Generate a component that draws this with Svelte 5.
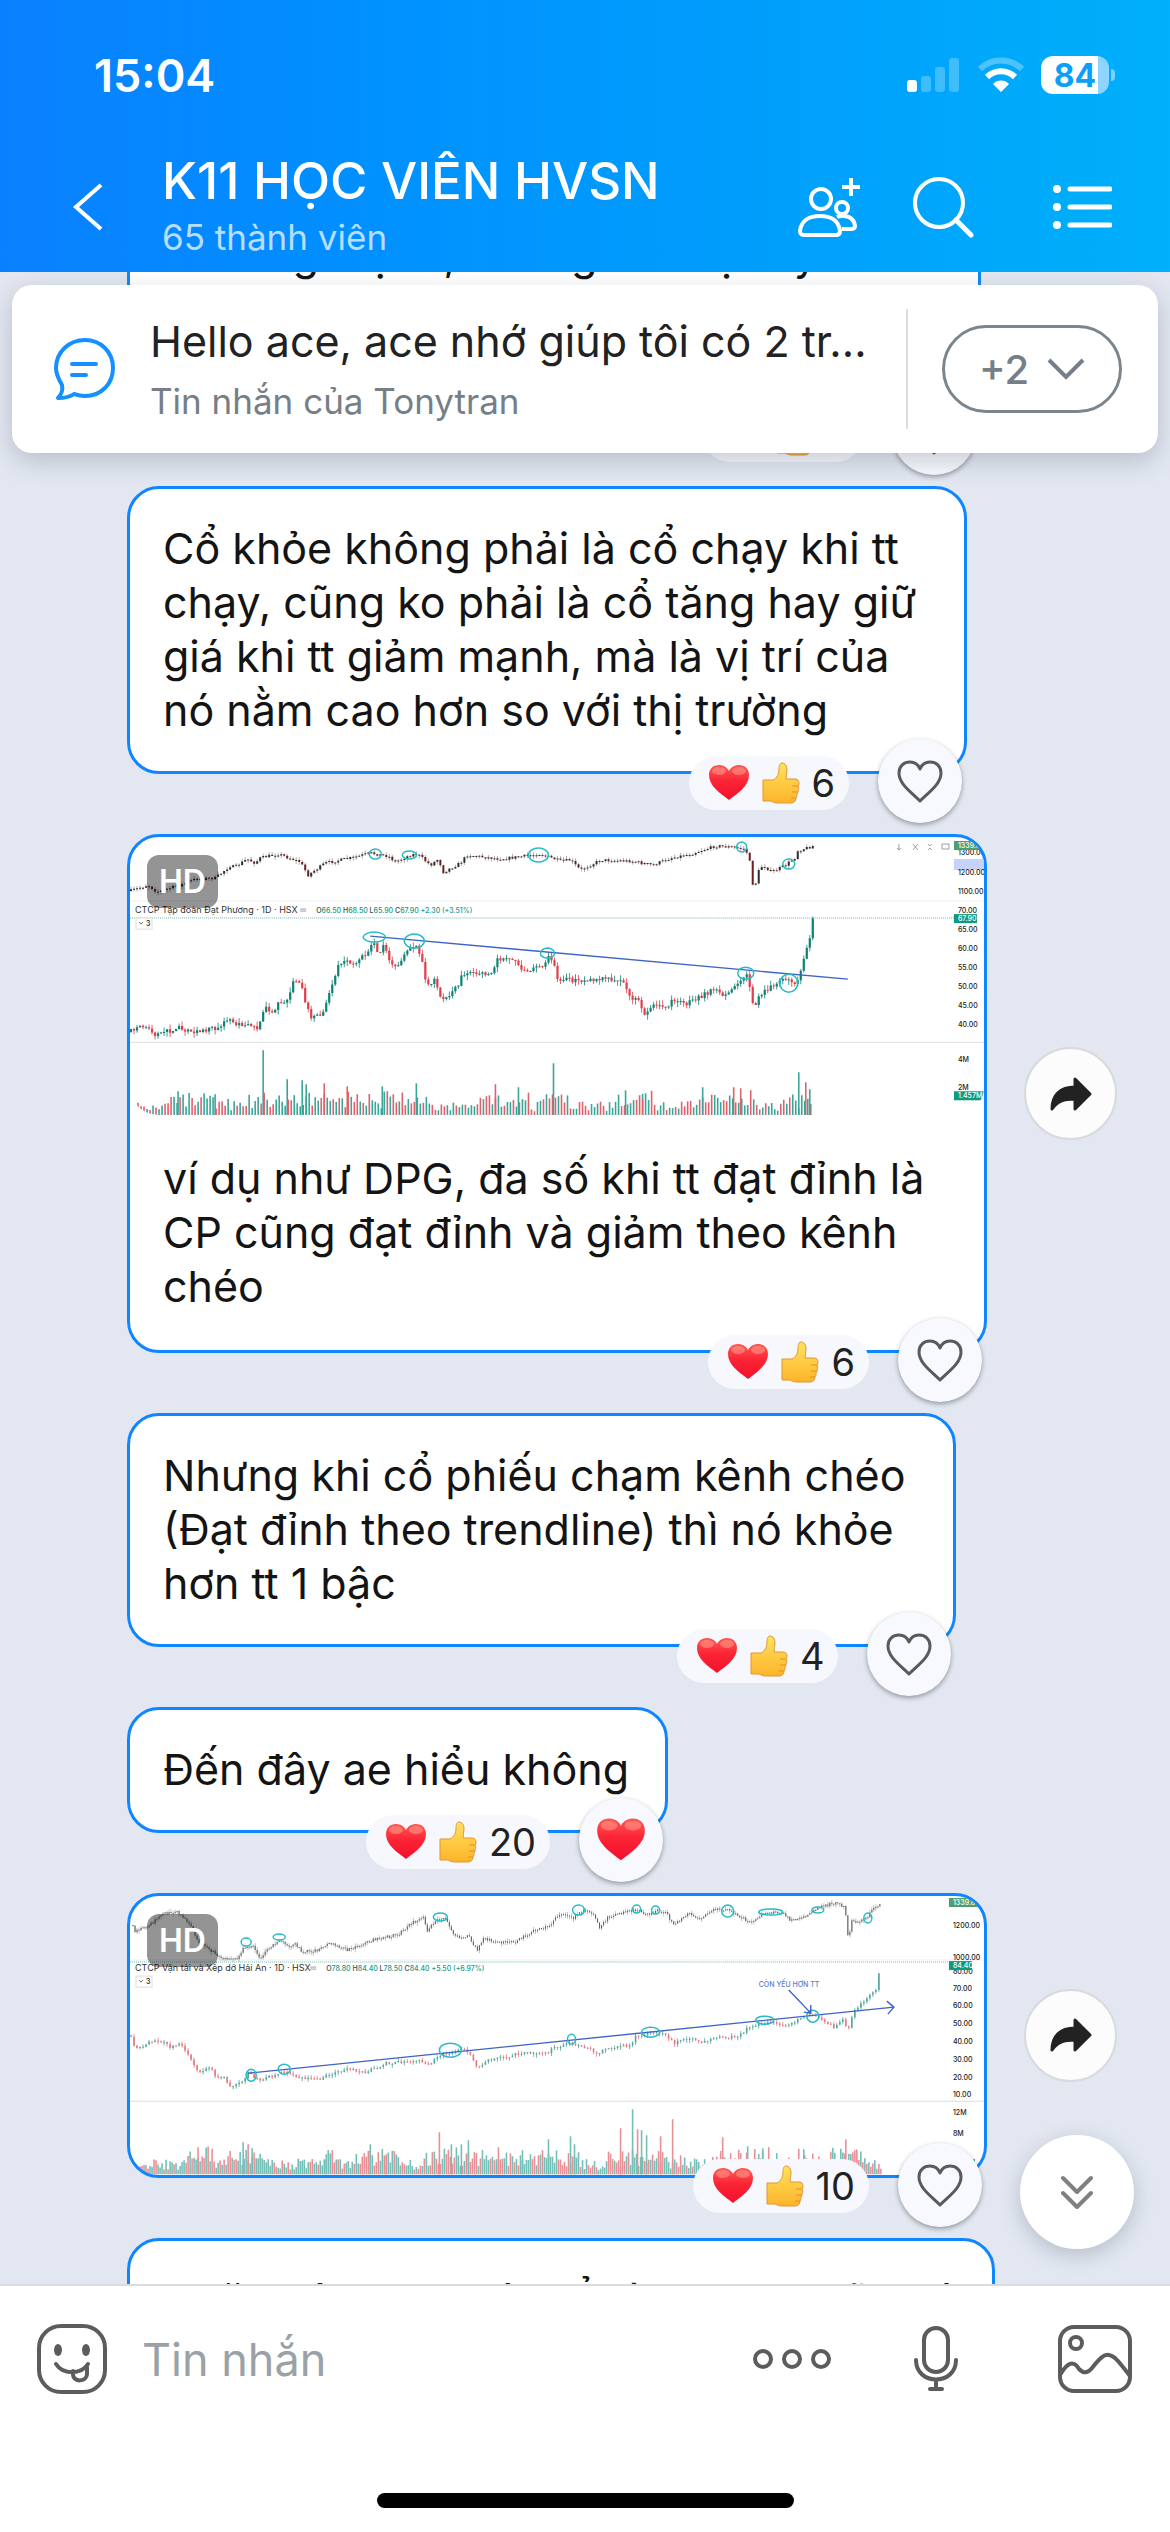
<script>
  const messages = [
    { lines: ['Thường mạnh, nhưng vẫn bị đẩy ra xa', '\u00a0', '\u00a0'], count: 5, wide: true },
    {
      lines: [
        'Cổ khỏe không phải là cổ chạy khi tt',
        'chạy, cũng ko phải là cổ tăng hay giữ',
        'giá khi tt giảm mạnh, mà là vị trí của',
        'nó nằm cao hơn so với thị trường'
      ],
      count: 6,
      wide: true
    },
    {
      chart: 'dpg',
      lines: ['ví dụ như DPG, đa số khi tt đạt đỉnh là', 'CP cũng đạt đỉnh và giảm theo kênh', 'chéo'],
      count: 6
    },
    {
      lines: ['Nhưng khi cổ phiếu chạm kênh chéo', '(Đạt đỉnh theo trendline) thì nó khỏe', 'hơn tt 1 bậc'],
      count: 4,
      wide: true
    },
    { lines: ['Đến đây ae hiểu không'], count: 20, liked: true },
    { chart: 'hah', lines: [], count: 10 },
    { lines: ['Hoặc dân xem có thể hình dạng cũ khó'], count: 0 }
  ];

  // Charts: anchor points are x,y pairs, the candles between them are filled in
  const charts = {
    dpg: {
      name: 'CTCP Tập đoàn Đạt Phương · 1D · HSX',
      ohlc: [['O', '66.50'], ['H', '68.50'], ['L', '65.90'], ['C', '67.90'], ['', '+2.30 (+3.51%)']],
      ohlcX: 186,
      nameY: 76,
      dotted: 81,
      axisX: 827,
      seed: 7,
      strong: true,
      index: '0,54 18,48 27,55 53,47 65,42 85,41 100,29 105,30 117,22 125,26 130,21 148,17 162,22 170,25 178,38 195,26 225,20 240,16 246,17 258,19 265,25 280,18 287,17 300,28 308,22 313,35 330,26 337,18 370,22 387,20 410,17 430,24 440,23 450,33 470,23 500,24 522,28 540,21 560,17 585,9 600,10 615,12 619,25 621,45 624,50 628,34 632,28 641,35 655,28 665,20 666,14 682,9',
      price: '0,195 11,188 26,198 50,190 62,196 82,192 100,183 105,188 117,185 127,192 135,171 143,175 148,165 157,165 163,146 170,145 175,165 180,180 192,176 200,153 207,131 215,121 220,128 235,118 245,105 248,116 254,108 258,121 265,131 280,111 287,108 292,126 297,150 305,143 312,163 327,150 332,138 363,135 367,123 377,120 387,125 392,136 412,128 418,120 423,126 427,143 452,143 477,140 493,146 498,158 510,165 513,176 527,166 533,171 545,161 552,168 568,160 583,153 593,158 605,150 613,138 617,140 621,160 624,173 628,158 640,150 655,141 662,148 668,143 672,128 675,116 679,100 682,82',
      spikes: '48,24 85,21 133,65 157,36 172,35 176,31 194,32 217,29 252,29 286,32 365,31 388,28 423,52 495,25 512,16 572,28 603,28 610,27 668,43 675,33 679,26',
      volumeTop: 10,
      labels: [['1300.00', 15], ['1200.00', 35], ['1100.00', 54], ['70.00', 73], ['65.00', 92], ['60.00', 111], ['55.00', 130], ['50.00', 149], ['45.00', 168], ['40.00', 187], ['4M', 222], ['2M', 250]],
      badges: [['1339.81', 4, 'pale'], ['67.90', 77, ''], ['1.457M', 254, '']],
      marks: [[245, 17, 6, 5], [279, 18, 7, 4], [408, 18, 10, 7], [611, 10, 5, 5], [658, 27, 6, 5], [244, 100, 11, 5], [284, 104, 10, 7], [417, 116, 7, 5], [615, 136, 8, 6], [658, 146, 9, 9]],
      trend: [240, 99, 717, 142]
    },
    hah: {
      name: 'CTCP Vận tải và Xếp dỡ Hải An · 1D · HSX',
      ohlc: [['O', '78.80'], ['H', '84.40'], ['L', '78.50'], ['C', '84.40'], ['', '+5.50 (+6.97%)']],
      ohlcX: 196,
      nameY: 75,
      dotted: 66,
      axisX: 822,
      seed: 23,
      strong: false,
      index: '2,29 5,36 20,29 33,17 47,16 60,27 68,46 83,56 90,62 108,62 113,51 123,51 130,62 140,51 150,44 160,52 165,47 172,56 187,54 198,47 217,54 235,47 242,44 267,39 283,26 293,22 297,34 305,24 315,22 323,37 330,42 337,39 347,54 353,42 367,46 385,46 400,36 417,31 417,34 425,22 432,17 443,22 453,14 462,17 469,32 477,22 490,17 507,14 518,19 527,14 535,17 544,29 557,17 570,22 583,14 597,13 610,21 620,27 633,17 652,17 660,24 677,19 687,12 702,7 714,10 716,27 718,49 720,22 725,27 737,22 742,11 750,9',
      price: '0,139 5,154 17,147 30,144 40,151 50,147 60,161 68,176 80,172 87,182 93,180 101,190 112,184 118,177 130,184 153,176 172,182 190,183 203,177 217,173 235,176 257,167 290,164 298,169 312,157 323,157 335,152 347,171 357,164 377,160 390,157 417,157 423,151 442,147 455,151 467,157 480,151 500,149 505,139 527,136 538,141 544,147 557,142 573,146 590,141 607,141 617,132 637,126 657,129 677,119 690,122 703,131 713,122 717,136 723,114 732,107 740,96 744,99 748,77 750,67',
      spikes: '68,27 113,32 118,30 122,26 196,20 240,30 256,20 309,42 321,30 331,30 338,34 368,27 392,24 418,35 440,38 444,30 490,46 502,65 507,45 511,44 516,39 542,55 530,38 592,37 617,28 632,26 673,25 715,35 722,22',
      volumeTop: 12,
      labels: [['1200.00', 29], ['1000.00', 61], ['80.00', 75], ['70.00', 92], ['60.00', 109], ['50.00', 127], ['40.00', 145], ['30.00', 163], ['20.00', 181], ['10.00', 198], ['12M', 216], ['8M', 237]],
      badges: [['1339.81', 2, 'pale'], ['84.40', 65, '']],
      marks: [[116, 46, 5, 4], [149, 41, 6, 3], [310, 21, 7, 4], [448, 14, 6, 5], [506, 13, 4, 4], [525, 14, 4, 4], [597, 15, 6, 6], [640, 16, 12, 3], [687, 14, 6, 3], [737, 22, 4, 5], [121, 179, 5, 6], [154, 173, 6, 5], [320, 154, 11, 7], [441, 143, 4, 5], [634, 124, 9, 4], [520, 136, 9, 5], [682, 120, 6, 6]],
      trend: [118, 177, 763, 111]
    }
  };

  function random(seed) {
    let s = seed;
    return () => {
      s = (s * 16807) % 2147483647;
      return s / 2147483647;
    };
  }

  function points(text) {
    return text.split(' ').map((p) => p.split(',').map(Number));
  }

  function candles(text, seed, step, size) {
    const anchors = points(text);
    const next = random(seed);
    const last = anchors[anchors.length - 1][0];
    const list = [];
    let i = 0;
    let prev = anchors[0][1];
    for (let x = anchors[0][0] + 1; x <= last; x += step) {
      while (i < anchors.length - 2 && x > anchors[i + 1][0]) i++;
      const [x1, y1] = anchors[i];
      const [x2, y2] = anchors[i + 1];
      const y = y1 + ((y2 - y1) * (x - x1)) / Math.max(1, x2 - x1) + (next() - 0.5) * size;
      const top = Math.min(prev, y);
      const bottom = Math.max(prev, y, top + 1);
      list.push({ x, top, bottom, high: top - next() * size, low: bottom + next() * size, up: y < prev });
      prev = y;
    }
    return list;
  }

  function volume(chart) {
    const spikes = points(chart.spikes);
    const next = random(chart.seed + 4);
    const list = [];
    for (let x = 2; x < (chart.strong ? 683 : 751); x += chart.strong ? 3 : 2) {
      const near = spikes.some(([sx]) => Math.abs(sx - x) < 16);
      list.push({ x, h: 4 + next() * chart.volumeTop + (near ? next() * 12 : 0), up: next() > 0.48 });
    }
    for (const [x, h] of spikes) list.push({ x, h, up: next() > 0.4 });
    return list;
  }

  const bars = [8, 16, 25, 34];
</script>

{#snippet heart(size)}
  <svg width={size} height={size} viewBox="0 0 42 42" aria-hidden="true">
    <path d="M21 38C12 31 1 24 1 13 1 7 5 3 11 3c4 0 8 2 10 6 2-4 6-6 10-6 6 0 10 4 10 10 0 11-11 18-20 25z" fill="url(#red)" />
    <ellipse cx="11" cy="9" rx="7" ry="4" fill="#ff9c8c" opacity=".55" />
    <ellipse cx="31" cy="9" rx="7" ry="4" fill="#ff9c8c" opacity=".55" />
  </svg>
{/snippet}

{#snippet thumb()}
  <svg width="38" height="42" viewBox="0 0 38 42" aria-hidden="true">
    <path
      d="M1 18h10c4-2 6-6 6-11 0-4 1-6 3-6 3 0 5 3 5 7 0 3-1 6-1 9h9c3 0 4 2 4 4 0 1 0 2-1 3 1 1 1 3 0 5 0 1 0 2-1 3 0 2 0 3-1 4 0 3-2 5-5 5H16c-3 0-5-1-7-2H1z"
      fill="url(#gold)"
      stroke="#e39532"
      stroke-width="1"
    />
    <path d="M36 24h-6M36 30h-6M34 36h-5" stroke="#e0912c" stroke-width="1" fill="none" />
  </svg>
{/snippet}

{#snippet stockChart(chart)}
  <svg class="chart" viewBox="0 0 853 278" role="img" aria-label={chart.name}>
    <line x1="0" x2="853" y1="64" y2="64" stroke="#eceef2" />
    <line x1="0" x2="853" y1="205" y2="205" stroke="#dadde2" />
    <line x1="0" x2={chart.axisX - 4} y1={chart.dotted} y2={chart.dotted} stroke="#74b5ad" stroke-dasharray="1 1" />
    <g opacity={chart.strong ? 1 : 0.75}>
      {#each candles(chart.index, chart.seed, chart.strong ? 3 : 2, 3) as c}
        <line x1={c.x} x2={c.x} y1={c.high} y2={c.low} stroke="#777" stroke-width="0.6" />
        <line x1={c.x} x2={c.x} y1={c.top} y2={c.bottom} stroke={c.up || !chart.strong ? '#2e2e2e' : '#6b2020'} stroke-width={chart.strong ? 2 : 1.1} />
      {/each}
    </g>
    <g opacity={chart.strong ? 1 : 0.7}>
      {#each candles(chart.price, chart.seed + 1, 3, chart.strong ? 5 : 3) as c}
        <line x1={c.x} x2={c.x} y1={c.high} y2={c.low} stroke={c.up ? '#0d8275' : '#dd3f4b'} stroke-width="0.8" />
        <line x1={c.x} x2={c.x} y1={c.top} y2={c.bottom} stroke={c.up ? '#0d8275' : '#dd3f4b'} stroke-width={chart.strong ? 2.2 : 1.6} />
      {/each}
    </g>
    <g opacity={chart.strong ? 1 : 0.7}>
      {#each volume(chart) as v}
        <line x1={v.x} x2={v.x} y1={278 - v.h} y2="278" stroke={v.up ? '#3aa599' : '#e0616b'} stroke-width="1.6" />
      {/each}
    </g>
    <line x1={chart.trend[0]} y1={chart.trend[1]} x2={chart.trend[2]} y2={chart.trend[3]} stroke="#3d62c8" stroke-width="1.4" />
    {#each chart.marks as [cx, cy, rx, ry]}
      <ellipse {cx} {cy} {rx} {ry} fill="none" stroke="#25bcc6" stroke-width="1.5" />
    {/each}
    {#if chart.strong}
      <rect x="823" y="22" width="30" height="11" fill="#c5d3fb" />
      <path d="M768 7v6m-2-2 2 2 2-2M782 7l5 6m0-6-5 6M797 7l2 2 2-2m-4 6 2-2 2 2M811 7h7v5h-7z" fill="none" stroke="#888" stroke-width="0.8" />
    {:else}
      <path d="m756 105 7 6-6 7M658 94l22 23m-7-1 7 1v-8" fill="none" stroke="#3d62c8" stroke-width="1.4" />
      <text class="note" x="628" y="91">CÒN YẾU HƠN TT</text>
      <rect x="818" y="263" width="26" height="9" fill="#0f9a80" />
    {/if}
    <text class="name" x="5" y={chart.nameY}>{chart.name}</text>
    <path d="M{chart.ohlcX - 16} {chart.nameY - 4}h6m-6 2h6" stroke="#888" stroke-width="0.8" />
    <text class="ohlc" x={chart.ohlcX} y={chart.nameY}>
      {#each chart.ohlc as [key, value]}<tspan fill="#444">{key}</tspan><tspan fill="#169a8d">{value}&nbsp; </tspan>{/each}
    </text>
    <rect x="6" y={chart.nameY + 5} width="16" height="11" fill="#fff" stroke="#ddd" />
    <path d="m9 {chart.nameY + 9} 2 2 2-2" fill="none" stroke="#444" stroke-width="0.8" />
    <text class="axis" x="16" y={chart.nameY + 13}>3</text>
    {#each chart.labels as [label, y]}
      <text class="axis" x={chart.axisX} y={y + 3}>{label}</text>
    {/each}
    {#each chart.badges as [label, y, tone]}
      <rect x={chart.axisX - 4} {y} width={label.length > 5 ? 30 : 23} height="9" fill={tone === 'pale' ? '#4f9e6e' : '#0f9a80'} />
      <text class="axis light" x={chart.axisX} y={y + 7}>{label}</text>
    {/each}
  </svg>
{/snippet}

<svg class="defs" aria-hidden="true">
  <defs>
    <linearGradient id="red" x1="0" y1="0" x2="0" y2="1">
      <stop offset="0" stop-color="#ff5a55" />
      <stop offset=".45" stop-color="#fb2435" />
      <stop offset="1" stop-color="#f3102c" />
    </linearGradient>
    <linearGradient id="gold" x1="0" y1="0" x2="0" y2="1">
      <stop offset="0" stop-color="#ffe25c" />
      <stop offset="1" stop-color="#fdb42a" />
    </linearGradient>
  </defs>
</svg>

<div class="app">
  <header>
    <div class="status">
      <time>15:04</time>
      <div class="status-icons">
        <svg width="54" height="36" viewBox="0 0 54 36" aria-hidden="true">
          {#each bars as h, i}
            <rect x={i * 14} y={35 - h - (i === 0 ? 4 : 0)} width="10" height={h + (i === 0 ? 4 : 0)} rx="3" fill="#fff" opacity={i === 0 ? 1 : 0.25} />
          {/each}
        </svg>
        <svg width="48" height="36" viewBox="0 0 48 36" fill="none" stroke="#fff" aria-hidden="true">
          <path d="M3 12a30 30 0 0 1 42 0" stroke-width="6" opacity=".3" />
          <path d="M10 20a20 20 0 0 1 28 0" stroke-width="6" />
          <path d="M24 35l-8-8a11 11 0 0 1 16 0z" fill="#fff" stroke="none" />
        </svg>
        <div class="battery"><span>84</span></div>
      </div>
    </div>
    <div class="title-bar">
      <button class="back" aria-label="Quay lại">
        <svg width="32" height="48" viewBox="0 0 32 48"><path d="M29 2 4 24l25 22" fill="none" stroke="#fff" stroke-width="4" /></svg>
      </button>
      <div class="title">
        <h1>K11 HỌC VIÊN HVSN</h1>
        <p>65 thành viên</p>
      </div>
      <button aria-label="Thêm thành viên">
        <svg width="64" height="62" viewBox="0 0 64 62" fill="none" stroke="#fff" stroke-width="4">
          <circle cx="23" cy="23" r="10" />
          <path d="M5 59c-2 0-3-2-3-4 1-10 9-15 20-15s19 5 20 15c0 2-1 4-4 4z" stroke-linejoin="round" />
          <circle cx="44" cy="32" r="6" />
          <path d="M44 53h9c3 0 4-1 4-3-1-7-5-10-12-10-3 0-4 0-6 1" />
          <path d="M53 2v18M44 11h18" />
        </svg>
      </button>
      <button aria-label="Tìm kiếm">
        <svg width="62" height="62" viewBox="0 0 62 62" fill="none" stroke="#fff" stroke-width="4">
          <circle cx="27" cy="27" r="24" />
          <path d="m44 44 15 15" stroke-width="5" stroke-linecap="round" />
        </svg>
      </button>
      <button class="menu" aria-label="Tùy chọn">
        <svg width="60" height="48" viewBox="0 0 60 48" fill="#fff">
          <circle cx="5" cy="6" r="4" /><circle cx="5" cy="24" r="4" /><circle cx="5" cy="42" r="4" />
          <path d="M18 6h40M18 24h40M18 42h40" stroke="#fff" stroke-width="5" stroke-linecap="round" />
        </svg>
      </button>
    </div>
  </header>

  <main>
    <section class="pinned">
      <svg width="64" height="64" viewBox="0 0 64 64" fill="none" stroke="#1590ff" stroke-width="4" stroke-linejoin="round" stroke-linecap="round">
        <path d="M33 3c16 0 28 12 28 28S49 59 33 59c-5 0-8-1-11-2-4 3-10 4-16 4 3-3 5-8 4-13-3-5-6-10-6-17C4 15 17 3 33 3z" />
        <path d="M20 27h24M20 38h14" />
      </svg>
      <div class="pinned-text">
        <p class="pinned-title">Hello ace, ace nhớ giúp tôi có 2 tr...</p>
        <p class="pinned-from">Tin nhắn của Tonytran</p>
      </div>
      <button class="more">
        +2
        <svg width="38" height="24" viewBox="0 0 38 24" aria-hidden="true"><path d="m2 3 17 17L36 3" fill="none" stroke="#767e87" stroke-width="4" /></svg>
      </button>
    </section>

    <div class="messages">
      {#each messages as message}
        <div class="row">
          <article class="bubble" class:media={message.chart}>
            {#if message.chart}
              <div class="picture">
                {@render stockChart(charts[message.chart])}
                <span class="hd">HD</span>
              </div>
            {/if}
            {#if message.lines.length}
              <p class="text" class:wide={message.wide}>{message.lines.join('\n')}</p>
            {/if}
            {#if message.count}
              <div class="reactions">
                <button class="pill">{@render heart(42)}{@render thumb()}<span>{message.count}</span></button>
                <button class="like" aria-label="Thích">
                  {#if message.liked}
                    {@render heart(50)}
                  {:else}
                    <svg width="46" height="44" viewBox="0 0 46 44" fill="none" stroke="#5a5a5c" stroke-width="3" stroke-linejoin="round">
                      <path d="M23 42C14 33 2 25 2 14 2 7 7 3 13 3c4 0 8 2 10 7 2-5 6-7 10-7 6 0 11 4 11 11 0 11-12 19-21 28z" />
                    </svg>
                  {/if}
                </button>
              </div>
            {/if}
          </article>
          {#if message.chart}
            <button class="share" aria-label="Chia sẻ">
              <svg width="44" height="36" viewBox="0 0 44 36">
                <path d="M26 3v8C11 11 3 19 3 33c5-8 12-10 23-10v10l15-15z" fill="#222" stroke="#222" stroke-width="3" stroke-linejoin="round" />
              </svg>
            </button>
          {/if}
        </div>
      {/each}
    </div>

    <button class="down" aria-label="Xuống cuối">
      <svg width="34" height="34" viewBox="0 0 34 34" fill="none" stroke="#808080" stroke-width="4" stroke-linecap="round" stroke-linejoin="round">
        <path d="m3 3 14 14L31 3M3 18l14 14 14-14" />
      </svg>
    </button>
  </main>

  <footer>
    <div class="composer">
      <button aria-label="Nhãn dán">
        <svg width="72" height="72" viewBox="0 0 72 72" fill="none" stroke="#5c5c5e" stroke-width="4">
          <rect x="3" y="3" width="66" height="66" rx="22" />
          <ellipse cx="22" cy="27" rx="4" ry="6" fill="#5c5c5e" stroke="none" />
          <ellipse cx="50" cy="27" rx="4" ry="6" fill="#5c5c5e" stroke="none" />
          <path d="M20 41c7 11 25 11 32 0M37 48v3c0 9 14 8 14 0v-7" stroke-linecap="round" />
        </svg>
      </button>
      <input type="text" placeholder="Tin nhắn" aria-label="Tin nhắn" />
      <button class="dots" aria-label="Thêm">
        <svg width="80" height="24" viewBox="0 0 80 24" fill="none" stroke="#5c5c5e" stroke-width="4">
          <circle cx="11" cy="12" r="8" /><circle cx="40" cy="12" r="8" /><circle cx="69" cy="12" r="8" />
        </svg>
      </button>
      <button class="mic" aria-label="Ghi âm">
        <svg width="44" height="66" viewBox="0 0 44 66" fill="none" stroke="#5c5c5e" stroke-width="4" stroke-linecap="round">
          <rect x="10" y="2" width="24" height="44" rx="12" />
          <path d="M2 34c0 26 40 26 40 0M22 54v9M16 63h12" />
        </svg>
      </button>
      <button class="photo" aria-label="Hình ảnh">
        <svg width="74" height="68" viewBox="0 0 74 68" fill="none" stroke="#5c5c5e" stroke-width="4">
          <rect x="2" y="2" width="70" height="64" rx="14" />
          <circle cx="18" cy="18" r="6" />
          <path d="M2 50c8-14 14-14 19-6 5 5 9 4 13-1 8-10 12-14 17-13 6 1 11 8 21 21" />
        </svg>
      </button>
    </div>
    <div class="home"></div>
  </footer>
</div>

<style>
  :global(body) {
    margin: 0;
    font-family: Inter, Roboto, sans-serif;
    color: #141414;
  }

  .defs {
    position: absolute;
    width: 0;
    height: 0;
  }

  .app {
    display: flex;
    flex-direction: column;
    height: 100vh;
    overflow: hidden;
  }

  h1,
  p {
    margin: 0;
  }

  button {
    display: flex;
    align-items: center;
    justify-content: center;
    padding: 0;
    border: none;
    background: none;
    color: inherit;
    font: inherit;
    cursor: pointer;
  }

  svg {
    display: block;
    flex: none;
  }

  header {
    position: relative;
    z-index: 2;
    color: #fff;
    background: linear-gradient(90deg, #0a80ff 0%, #0092ff 35%, #009cfc 60%, #00b0fa 100%);
  }

  .status {
    display: flex;
    justify-content: space-between;
    align-items: center;
    height: 80px;
    padding: 35px 61px 33px 94px;
  }

  .status time {
    font-size: 45px;
    font-weight: 600;
  }

  .status-icons {
    display: flex;
    align-items: center;
    gap: 16px;
  }

  .battery {
    position: relative;
    display: flex;
    align-items: center;
    justify-content: center;
    width: 68px;
    height: 38px;
    border-radius: 12px;
    background: linear-gradient(90deg, #fff 84%, #8fd4ff 84%);
    color: #0aa0fa;
    font-size: 32px;
    font-weight: 700;
  }

  .battery::after {
    content: '';
    position: absolute;
    right: -6px;
    width: 4px;
    height: 12px;
    border-radius: 0 4px 4px 0;
    background: #7fcfff;
  }

  .title-bar {
    display: flex;
    align-items: center;
    height: 124px;
    padding: 0 58px 11px 72px;
    box-sizing: border-box;
  }

  .title-bar button {
    margin-top: 4px;
    margin-right: 50px;
  }

  .title-bar .back {
    margin-right: 58px;
  }

  .title-bar .menu {
    margin-left: 28px;
    margin-right: 0;
  }

  .title {
    flex: 1;
    min-width: 0;
  }

  h1 {
    font-size: 51px;
    line-height: 64px;
    font-weight: 500;
  }

  .title p {
    font-size: 35px;
    line-height: 48px;
    color: #b5deff;
  }

  main {
    position: relative;
    flex: 1;
    min-height: 0;
    overflow: hidden;
    background: #e2e7f1;
  }

  .pinned {
    position: absolute;
    z-index: 1;
    top: 13px;
    left: 12px;
    right: 12px;
    display: flex;
    align-items: center;
    height: 168px;
    padding: 0 36px 0 40px;
    box-sizing: border-box;
    border-radius: 20px;
    background: #fff;
    box-shadow: 0 8px 24px rgba(60, 70, 90, 0.25);
  }

  .pinned-text {
    flex: 1;
    min-width: 0;
    margin-left: 34px;
    padding-right: 32px;
    border-right: 2px solid #d8dbe0;
  }

  .pinned-title {
    overflow: hidden;
    white-space: nowrap;
    font-size: 43px;
    line-height: 64px;
    color: #222;
  }

  .pinned-from {
    font-size: 35px;
    line-height: 56px;
    color: #767e87;
  }

  .more {
    gap: 18px;
    width: 180px;
    height: 88px;
    margin-left: 34px;
    border: 3px solid #7c848c;
    border-radius: 44px;
    color: #767e87;
    font-size: 40px;
    font-weight: 500;
  }

  .messages {
    display: flex;
    flex-direction: column;
    gap: 60px;
    margin-top: -80px;
    padding: 0 53px 0 127px;
  }

  .row {
    display: flex;
    align-items: center;
    gap: 37px;
  }

  .bubble {
    position: relative;
    border: 3px solid #0f86ff;
    border-radius: 32px;
    background: #fff;
  }

  .bubble.media {
    flex: 1;
    min-width: 0;
  }

  .picture {
    position: relative;
    overflow: hidden;
    border-radius: 28px;
  }

  .chart {
    width: 100%;
    height: auto;
  }

  .name {
    font-size: 9px;
    fill: #333;
  }

  .ohlc,
  .axis,
  .note {
    font-size: 7px;
    font-weight: 500;
    fill: #222;
  }

  .axis.light {
    fill: #fff;
  }

  .note {
    fill: #5c7bd0;
  }

  .hd {
    position: absolute;
    top: 18px;
    left: 17px;
    padding: 0 12px;
    border-radius: 12px;
    background: rgba(0, 0, 0, 0.42);
    color: #fff;
    font-size: 32px;
    line-height: 53px;
    font-weight: 600;
  }

  .text {
    padding: 32px 36px 34px 33px;
    font-size: 43px;
    line-height: 54px;
    white-space: pre;
  }

  .text.wide {
    padding-right: 48px;
  }

  .media .text {
    padding: 36px 33px 37px;
  }

  .reactions {
    position: absolute;
    right: 2px;
    bottom: -52px;
    display: flex;
    align-items: center;
    gap: 29px;
  }

  .pill {
    gap: 12px;
    height: 54px;
    margin-top: 3px;
    padding: 0 14px 0 19px;
    border-radius: 27px;
    background: #f7f8fd;
    color: #222;
    font-size: 38px;
  }

  .like {
    width: 84px;
    height: 84px;
    border-radius: 50%;
    background: #f8f9fe;
    box-shadow: 0 2px 5px rgba(0, 0, 0, 0.35);
  }

  .share {
    flex: none;
    width: 93px;
    height: 93px;
    border: 2px solid #d9dadd;
    border-radius: 50%;
    background: #fcfcfd;
  }

  .down {
    position: absolute;
    right: 36px;
    bottom: 35px;
    width: 114px;
    height: 114px;
    border-radius: 50%;
    background: #fff;
    box-shadow: 0 6px 20px rgba(60, 70, 90, 0.25);
  }

  footer {
    border-top: 2px solid #d9dbdf;
    background: #fff;
  }

  .composer {
    display: flex;
    align-items: center;
    height: 146px;
    padding: 0 38px 0 36px;
  }

  .composer input {
    flex: 1;
    min-width: 0;
    margin-left: 34px;
    padding: 0;
    border: none;
    outline: none;
    background: none;
    font: inherit;
    font-size: 45px;
  }

  .composer input::placeholder {
    color: #9aa1a7;
    opacity: 1;
  }

  .mic {
    margin: 0 100px 0 82px;
  }

  .home {
    width: 417px;
    height: 15px;
    margin: 61px auto 24px;
    border-radius: 8px;
    background: #000;
  }
</style>
